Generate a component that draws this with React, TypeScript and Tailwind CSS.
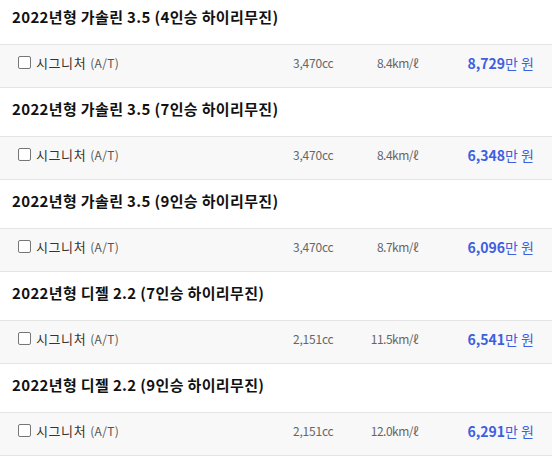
import React from "react";

const items = [
  { title: "2022년형 가솔린 3.5 (4인승 하이리무진)", cc: "3,470cc", eff: "8.4km/ℓ", price: "8,729" },
  { title: "2022년형 가솔린 3.5 (7인승 하이리무진)", cc: "3,470cc", eff: "8.4km/ℓ", price: "6,348" },
  { title: "2022년형 가솔린 3.5 (9인승 하이리무진)", cc: "3,470cc", eff: "8.7km/ℓ", price: "6,096" },
  { title: "2022년형 디젤 2.2 (7인승 하이리무진)", cc: "2,151cc", eff: "11.5km/ℓ", price: "6,541" },
  { title: "2022년형 디젤 2.2 (9인승 하이리무진)", cc: "2,151cc", eff: "12.0km/ℓ", price: "6,291" },
];

export default function App() {
  return (
    <div className="w-[552px] bg-white">
      <div className="flex flex-col font-['Noto_Sans_CJK_KR',sans-serif]">
        {items.map((it, i) => (
          <div key={i} className="mb-[4px] flex flex-col">
            <div className="flex h-[44px] items-start pl-[12px] pt-[6px]">
              <span className="text-[15px] font-bold leading-[22px] tracking-[0.35px] text-[#111]">{it.title}</span>
            </div>
            <div className="flex h-[44px] items-center border-y border-[#e4e4e4] bg-[#f8f8f8] pb-[7px]">
              <div className="flex w-[293px] items-center pl-[18px]">
                <span className="mr-[5px] h-[13px] w-[13px] rounded-[2px] border border-[#767676] bg-white" />
                <span className="text-[13px] leading-[18px] tracking-[0.6px] text-[#333]">시그니처</span>
                <span className="ml-[4px] text-[12px] leading-[18px] tracking-[0.3px] text-[#555]">(A/T)</span>
              </div>
              <div className="w-[55px] text-[12px] leading-[18px] tracking-[-0.2px] text-[#666]">{it.cc}</div>
              <div className="w-[70px] text-right text-[12px] leading-[18px] tracking-[-0.5px] text-[#666]">{it.eff}</div>
              <div className="w-[116px] text-right text-[14px] leading-[18px] text-[#3d5fe0]">
                <span className="font-bold">{it.price}</span>만 원
              </div>
            </div>
          </div>
        ))}
      </div>
    </div>
  );
}
